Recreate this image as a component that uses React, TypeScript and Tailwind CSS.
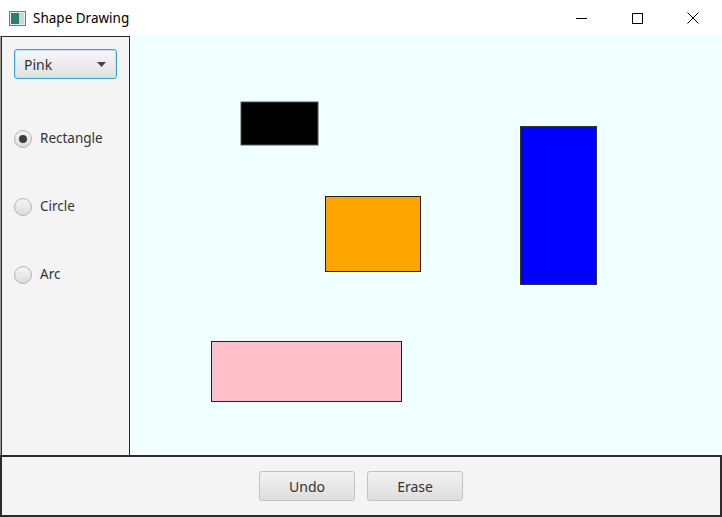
import React, { useState } from "react";

type Shape = { x: number; y: number; w: number; h: number; fill: string; stroke: string };

const shapes: Shape[] = [
  { x: 111, y: 66, w: 77, h: 43, fill: "#000000", stroke: "#555" },
  { x: 195.5, y: 160.5, w: 95, h: 75, fill: "#ffa500", stroke: "#222" },
  { x: 390.5, y: 90.5, w: 76, h: 158, fill: "#0000ff", stroke: "#333" },
  { x: 81.5, y: 305.5, w: 190, h: 60, fill: "#ffc0cb", stroke: "#222" },
];

const font = { fontFamily: '"Noto Sans", "Open Sans", sans-serif' };

function Radio({ label, checked, onClick }: { label: string; checked: boolean; onClick: () => void }) {
  return (
    <button className="flex h-[18px] items-center gap-[8px] text-[13.5px] leading-none text-[#333]" onClick={onClick}>
      <span className="flex h-[18px] w-[18px] items-center justify-center rounded-full border border-[#b5b5b5] bg-gradient-to-b from-[#f6f6f6] to-[#dcdcdc]">
        {checked ? <span className="h-[8px] w-[8px] rounded-full bg-[#3d3d3d]" /> : null}
      </span>
      <span>{label}</span>
    </button>
  );
}

export default function App() {
  const [kind, setKind] = useState("Rectangle");

  return (
    <div className="flex h-[517px] w-[722px] flex-col bg-white" style={font}>
      {/* title bar */}
      <div className="flex h-[36px] items-center bg-white">
        <svg width="17" height="15" viewBox="0 0 17 15" className="ml-[9px]">
          <rect x="0.5" y="0.5" width="16" height="14" fill="#e8eef0" stroke="#6b7b85" />
          <rect x="2" y="2" width="8" height="11" fill="#2f7f6f" />
          <rect x="10" y="2" width="5" height="11" fill="#c9d6dc" />
        </svg>
        <span className="ml-[7px] text-[13.5px] text-black">Shape Drawing</span>
        <div className="ml-auto mr-[6px] flex h-full items-center">
          <div className="flex h-full w-[46px] items-center justify-center">
            <svg width="11" height="11" viewBox="0 0 11 11">
              <line x1="0" y1="5.5" x2="11" y2="5.5" stroke="#000" strokeWidth="1" />
            </svg>
          </div>
          <div className="ml-[10px] flex h-full w-[46px] items-center justify-center">
            <svg width="11" height="11" viewBox="0 0 11 11">
              <rect x="0.5" y="0.5" width="10" height="10" fill="none" stroke="#000" strokeWidth="1" />
            </svg>
          </div>
          <div className="ml-[10px] flex h-full w-[46px] items-center justify-center">
            <svg width="12" height="12" viewBox="0 0 12 12">
              <path d="M0.5 0.5 L11.5 11.5 M11.5 0.5 L0.5 11.5" stroke="#000" strokeWidth="1" />
            </svg>
          </div>
        </div>
      </div>

      {/* main */}
      <div className="flex h-[419px] border-l border-[#9a9a9a]">
        <div className="flex w-[129px] flex-col border border-b-0 border-[#2b2b2b] bg-[#f4f4f4]">
          <button className="ml-[12px] mt-[12px] flex h-[30px] w-[103px] items-center justify-between rounded-[3px] border border-[#3ea3d8] bg-gradient-to-b from-[#f7f7f7] to-[#e1e1e1] pl-[9px] pr-[10px] text-[14px] text-[#333] shadow-[inset_0_0_0_1px_#bfe3f5]">
            <span>Pink</span>
            <svg width="9" height="5" viewBox="0 0 9 5">
              <path d="M0 0 L9 0 L4.5 5 Z" fill="#444" />
            </svg>
          </button>
          <div className="ml-[12px] mt-[51px] flex flex-col items-start gap-[50px]">
            <Radio label="Rectangle" checked={kind === "Rectangle"} onClick={() => setKind("Rectangle")} />
            <Radio label="Circle" checked={kind === "Circle"} onClick={() => setKind("Circle")} />
            <Radio label="Arc" checked={kind === "Arc"} onClick={() => setKind("Arc")} />
          </div>
        </div>
        <div className="flex-1 bg-[#f0ffff]">
          <svg width="591" height="419">
            {shapes.map((s, i) => (
              <rect key={i} x={s.x} y={s.y} width={s.w} height={s.h} fill={s.fill} stroke={s.stroke} strokeWidth="1" />
            ))}
          </svg>
        </div>
      </div>

      {/* bottom */}
      <div className="flex flex-1 items-center justify-center gap-[12px] border-2 border-[#2b2b2b] bg-[#f4f4f4]">
        <button className="h-[30px] w-[96px] rounded-[3px] border border-[#c2c2c2] bg-gradient-to-b from-[#f2f2f2] to-[#dedede] text-[14px] text-[#333]">
          Undo
        </button>
        <button className="h-[30px] w-[96px] rounded-[3px] border border-[#c2c2c2] bg-gradient-to-b from-[#f2f2f2] to-[#dedede] text-[14px] text-[#333]">
          Erase
        </button>
      </div>
    </div>
  );
}
